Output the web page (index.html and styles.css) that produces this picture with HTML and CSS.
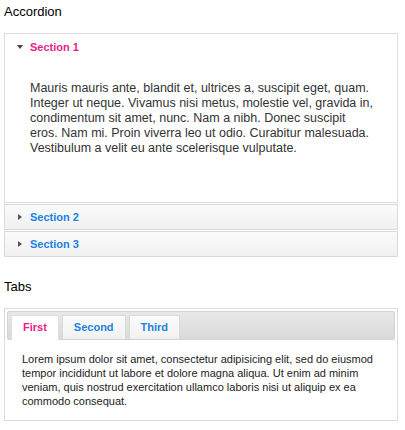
FILE: index.html
```html
<!DOCTYPE html>
<html>
<head>
<meta charset="utf-8">
<link rel="stylesheet" href="styles.css">
</head>
<body>
<h2 class="demo-title">Accordion</h2>
<div class="accordion">
  <div class="acc-header active"><span class="tri tri-down"></span>Section 1</div>
  <div class="acc-content">Mauris mauris ante, blandit et, ultrices a, suscipit eget, quam.<br>Integer ut neque. Vivamus nisi metus, molestie vel, gravida in,<br>condimentum sit amet, nunc. Nam a nibh. Donec suscipit<br>eros. Nam mi. Proin viverra leo ut odio. Curabitur malesuada.<br>Vestibulum a velit eu ante scelerisque vulputate.</div>
  <div class="acc-header"><span class="tri tri-right"></span>Section 2</div>
  <div class="acc-header"><span class="tri tri-right"></span>Section 3</div>
</div>
<h2 class="demo-title">Tabs</h2>
<div class="tabs">
  <ul class="tab-nav">
    <li class="tab active">First</li>
    <li class="tab">Second</li>
    <li class="tab">Third</li>
  </ul>
  <div class="tab-panel">Lorem ipsum dolor sit amet, consectetur adipisicing elit, sed do eiusmod tempor incididunt ut labore et dolore magna aliqua. Ut enim ad minim veniam, quis nostrud exercitation ullamco laboris nisi ut aliquip ex ea commodo consequat.</div>
</div>
</body>
</html>
```
FILE: styles.css
```css
html, body {
  margin: 0;
  background: #fff;
}
body {
  padding: 0 7px 0 4px;
  font-family: "Liberation Sans", Arial, sans-serif;
}
.demo-title {
  font-size: 13px;
  line-height: 16px;
  font-weight: normal;
  color: #000;
  margin: 4px 0 13px;
}
.accordion {
  margin-bottom: 22px;
}
.acc-header {
  display: flex;
  align-items: center;
  height: 26px;
  box-sizing: border-box;
  padding: 0 0 0 12px;
  border: 1px solid #d8d8d8;
  background: linear-gradient(#fafafa, #f1f1f1);
  color: #1a82e2;
  font-size: 11px;
  font-weight: bold;
  margin-top: 1px;
}
.acc-header.active {
  margin-top: 0;
  background: #fff;
  border-color: #dcdcdc;
  border-bottom: 0;
  color: #ee1a8b;
}
.tri {
  width: 0;
  height: 0;
  margin-right: 9px;
}
.tri-down {
  border-left: 3.5px solid transparent;
  border-right: 3.5px solid transparent;
  border-top: 4px solid #444;
  margin-left: 0;
  margin-right: 7px;
}
.tri-right {
  border-top: 3.5px solid transparent;
  border-bottom: 3.5px solid transparent;
  border-left: 4px solid #555;
  margin-left: 1px;
  margin-right: 8px;
}
.acc-content {
  box-sizing: border-box;
  height: 144px;
  border: 1px solid #dcdcdc;
  border-top: 0;
  padding: 22px 0 0 25px;
  font-size: 12.5px;
  line-height: 15px;
  color: #333;
  white-space: nowrap;
}
.tabs {
  border: 1px solid #dcdcdc;
  padding: 2px;
}
.tab-nav {
  list-style: none;
  margin: 0;
  padding: 3px 3px 0;
  display: flex;
  align-items: flex-start;
  gap: 3px;
  border: 1px solid #d3d3d3;
  border-radius: 2px;
  background: linear-gradient(#e8e8e8, #d9d9d9);
  height: 24px;
}
.tab {
  box-sizing: border-box;
  height: 24px;
  padding: 4px 11px 0;
  line-height: 14px;
  border: 1px solid #dadada;
  border-bottom: 0;
  background: linear-gradient(#fbfbfb, #f1f1f1);
  color: #1a82e2;
  font-size: 11px;
  font-weight: bold;
}
.tab.active {
  height: 25px;
  background: #fff;
  color: #ee1a8b;
  border-color: #e0e0e0;
}
.tab-panel {
  padding: 12px 12px 10px 15px;
  font-size: 11px;
  line-height: 14px;
  color: #222;
}
```
